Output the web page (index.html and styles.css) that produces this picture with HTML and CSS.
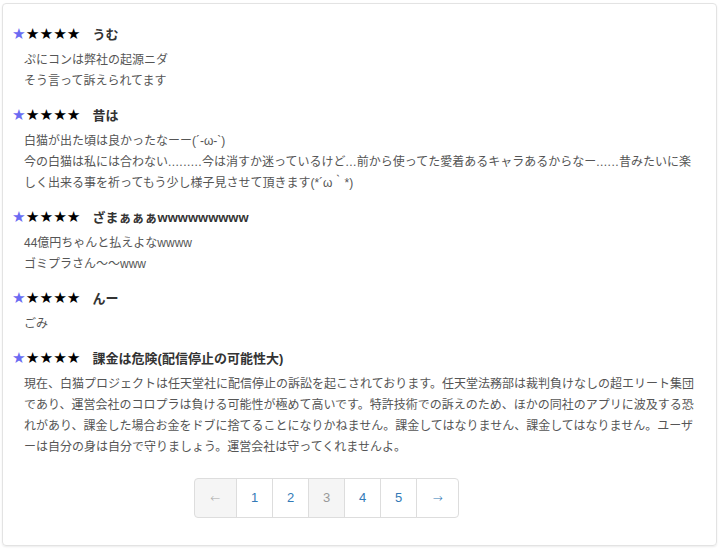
FILE: index.html
```html
<!DOCTYPE html>
<html lang="ja">

<head>
    <meta charset="UTF-8" />
    <meta name="viewport" content="width=device-width, initial-scale=1.0" />
    <title>レビュー</title>
    <link rel="stylesheet" href="styles.css">
</head>

<body>
    <div class="panel">
        <div class="review">
            <div class="review-head">
                <span class="stars"><span class="star-on">★</span>★★★★</span>
                <span class="review-title">うむ</span>
            </div>
            <div class="review-body">
                ぷにコンは弊社の起源ニダ<br>
                そう言って訴えられてます
            </div>
        </div>

        <div class="review">
            <div class="review-head">
                <span class="stars"><span class="star-on">★</span>★★★★</span>
                <span class="review-title">昔は</span>
            </div>
            <div class="review-body">
                白猫が出た頃は良かったなーー(´-ω-`)<br>
                今の白猫は私には合わない<span class="dots">.........</span>今は消すか迷っているけど<span class="dots">...</span>前から使ってた愛着あるキャラあるからなー<span class="dots">......</span>昔みたいに楽しく出来る事を祈ってもう少し様子見させて頂きます(*´ω｀*)
            </div>
        </div>

        <div class="review">
            <div class="review-head">
                <span class="stars"><span class="star-on">★</span>★★★★</span>
                <span class="review-title">ざまぁぁぁwwwwwwwww</span>
            </div>
            <div class="review-body">
                44億円ちゃんと払えよなwwww<br>
                ゴミプラさん〜〜www
            </div>
        </div>

        <div class="review">
            <div class="review-head">
                <span class="stars"><span class="star-on">★</span>★★★★</span>
                <span class="review-title">んー</span>
            </div>
            <div class="review-body">
                ごみ
            </div>
        </div>

        <div class="review">
            <div class="review-head">
                <span class="stars"><span class="star-on">★</span>★★★★</span>
                <span class="review-title">課金は危険(配信停止の可能性大)</span>
            </div>
            <div class="review-body">
                現在、白猫プロジェクトは任天堂社に配信停止の訴訟を起こされております。任天堂法務部は裁判負けなしの超エリート集団であり、運営会社のコロプラは負ける可能性が極めて高いです。特許技術での訴えのため、ほかの同社のアプリに波及する恐れがあり、課金した場合お金をドブに捨てることになりかねません。課金してはなりません、課金してはなりません。ユーザーは自分の身は自分で守りましょう。運営会社は守ってくれませんよ。
            </div>
        </div>

        <ul class="pagination">
            <li class="disabled arrow"><span>←</span></li>
            <li><a href="#">1</a></li>
            <li><a href="#">2</a></li>
            <li class="active"><span>3</span></li>
            <li><a href="#">4</a></li>
            <li><a href="#">5</a></li>
            <li class="arrow"><a href="#">→</a></li>
        </ul>
    </div>
</body>

</html>
```

FILE: styles.css
```css
body {
    margin: 0;
    font-family: "Liberation Sans", "Noto Sans CJK JP", sans-serif;
    background: #fff;
}

.panel {
    margin: 3px 3px 3px 2px;
    height: 543px;
    box-sizing: border-box;
    padding: 20px 9px 0 9px;
    border: 1px solid #e3e3e3;
    border-radius: 4px;
    box-shadow: 0 1px 2px rgba(0, 0, 0, 0.08);
}

.review {
    margin-bottom: 13px;
}

.review-head {
    display: flex;
    align-items: center;
    height: 21px;
    margin-bottom: 5px;
}

.stars {
    font-family: "DejaVu Sans", sans-serif;
    font-size: 15.3px;
    color: #000;
    line-height: 21px;
}

.star-on {
    color: #6b6bf2;
}

.review-title {
    margin-left: 12px;
    font-size: 13px;
    font-weight: bold;
    color: #333;
    line-height: 21px;
}

.review-body {
    padding-left: 12px;
    width: 672px;
    font-size: 12px;
    line-height: 21px;
    color: #555;
    line-break: loose;
}

/* 三点リーダー代わりのピリオドを少し広めに */
.dots {
    letter-spacing: 0.45px;
}

.pagination {
    display: flex;
    list-style: none;
    margin: 20px 0 0 182px;
    padding: 0;
}

.pagination li a,
.pagination li span {
    display: block;
    width: 35px;
    height: 38px;
    line-height: 38px;
    text-align: center;
    font-size: 13px;
    color: #337ab7;
    text-decoration: none;
    background: #fff;
    border: 1px solid #ddd;
    margin-left: -1px;
}

.pagination li.arrow a,
.pagination li.arrow span {
    width: 41px;
    font-family: "DejaVu Sans", sans-serif;
    font-size: 12px;
    font-weight: 300;
}

.pagination li:first-child span {
    margin-left: 0;
    border-radius: 4px 0 0 4px;
}

.pagination li:last-child a {
    border-radius: 0 4px 4px 0;
}

.pagination li.disabled span {
    color: #aaa;
    background: #f5f5f5;
}

.pagination li.active span {
    color: #999;
    background: #f5f5f5;
}
```
